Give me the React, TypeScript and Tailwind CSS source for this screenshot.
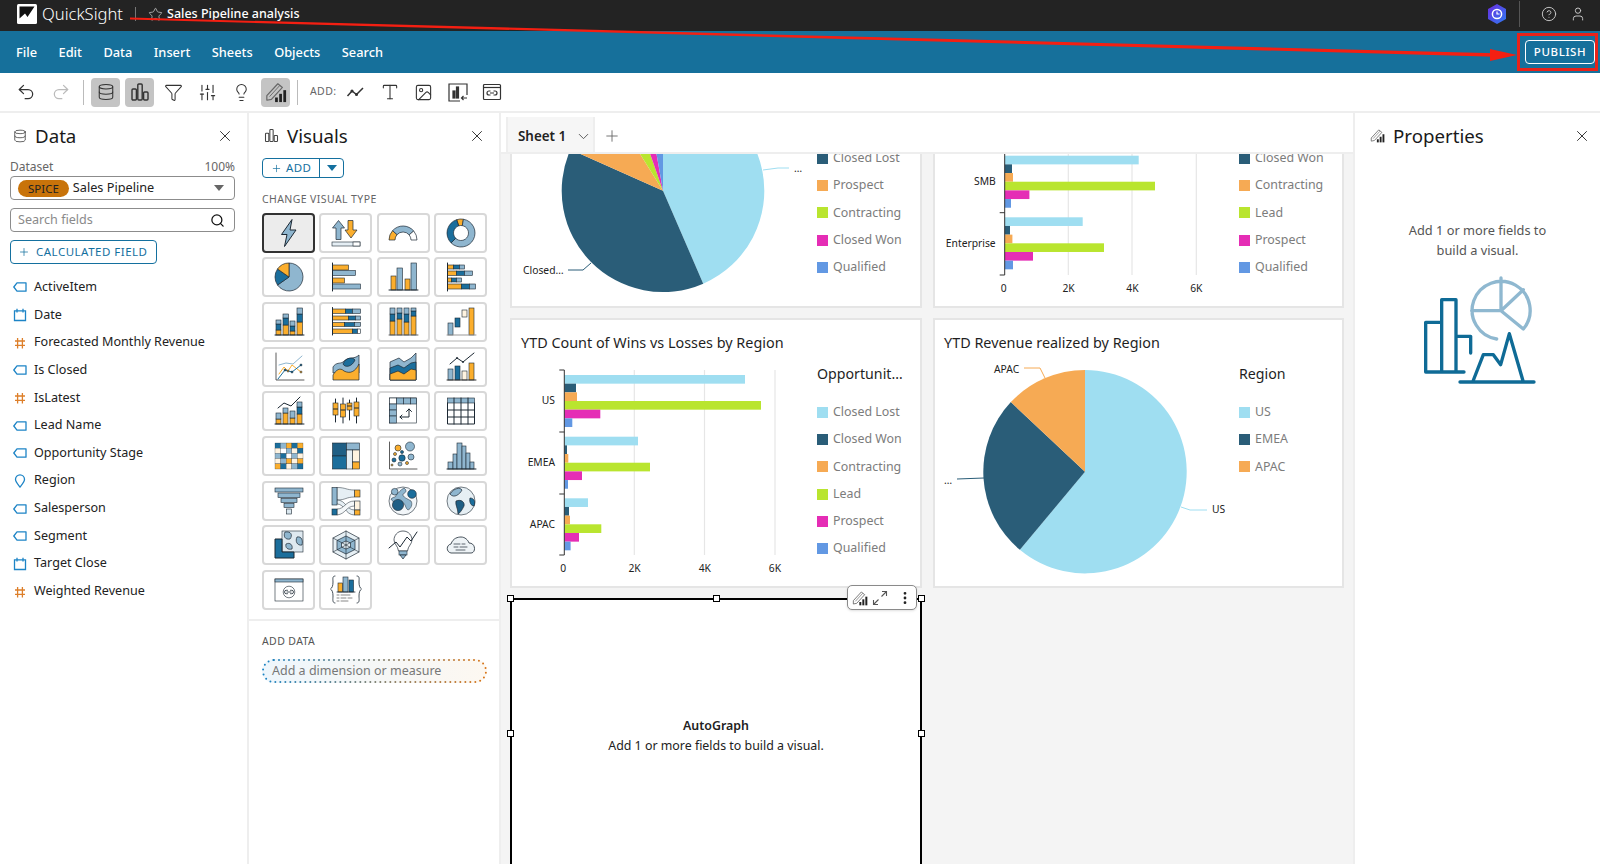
import type { ReactNode } from "react";
import { ChevronDown, CircleHelp, Database, EllipsisVertical, Funnel, Image, Lightbulb, Plus, Redo2, Search, SlidersVertical, Star, Type, Undo2, User, X } from "lucide-react";

const O = "#fbae2d";
const B = "#1b6e9c";
const L = "#8fb6cf";
const C = "#fff3e0";
const S = "#1c2833";

const LIGHT = "#9fdef1";
const DARK = "#2a5d78";
const ORANGE = "#f6aa54";
const LIME = "#b9e52f";
const PINK = "#e52db5";
const BLUE = "#6298e3";
const BAR_COLORS = [LIGHT, DARK, ORANGE, LIME, PINK, BLUE];

const MENU = ["File", "Edit", "Data", "Insert", "Sheets", "Objects", "Search"];

const FIELDS = [
  { type: "tag", name: "ActiveItem" },
  { type: "date", name: "Date" },
  { type: "num", name: "Forecasted Monthly Revenue" },
  { type: "tag", name: "Is Closed" },
  { type: "num", name: "IsLatest" },
  { type: "tag", name: "Lead Name" },
  { type: "tag", name: "Opportunity Stage" },
  { type: "pin", name: "Region" },
  { type: "tag", name: "Salesperson" },
  { type: "tag", name: "Segment" },
  { type: "date", name: "Target Close" },
  { type: "num", name: "Weighted Revenue" },
];

function polar(cx: number, cy: number, r: number, a: number) {
  const t = (a * Math.PI) / 180;
  return [cx + r * Math.sin(t), cy - r * Math.cos(t)];
}

function wedge(cx: number, cy: number, r: number, a0: number, a1: number) {
  const [x0, y0] = polar(cx, cy, r, a0);
  const [x1, y1] = polar(cx, cy, r, a1);
  return `M${cx} ${cy}L${x0} ${y0}A${r} ${r} 0 ${a1 - a0 > 180 ? 1 : 0} 1 ${x1} ${y1}Z`;
}

function ring(cx: number, cy: number, r: number, ri: number, a0: number, a1: number) {
  const [x0, y0] = polar(cx, cy, r, a0);
  const [x1, y1] = polar(cx, cy, r, a1);
  const [x2, y2] = polar(cx, cy, ri, a1);
  const [x3, y3] = polar(cx, cy, ri, a0);
  const big = a1 - a0 > 180 ? 1 : 0;
  return `M${x0} ${y0}A${r} ${r} 0 ${big} 1 ${x1} ${y1}L${x2} ${y2}A${ri} ${ri} 0 ${big} 0 ${x3} ${y3}Z`;
}

const r = (x: number, y: number, w: number, h: number, f: string) => <rect x={x} y={y} width={w} height={h} fill={f} stroke={S} strokeWidth={0.6} />;
const p = (d: string, f: string, sw = 0.7) => <path d={d} fill={f} stroke={S} strokeWidth={sw} strokeLinejoin="round" />;
const ln = (d: string, c = S, sw = 1) => <path d={d} fill="none" stroke={c} strokeWidth={sw} strokeLinecap="round" strokeLinejoin="round" />;
const dot = (x: number, y: number, d: number, f: string) => <circle cx={x} cy={y} r={d} fill={f} stroke={S} strokeWidth={0.6} />;

const HEAT = [
  [B, L, O, B, O],
  [C, "#fff", L, C, B],
  [L, B, "#fff", L, C],
  [C, L, O, C, O],
  [O, B, C, L, B],
];

const VISUAL_ICONS: ReactNode[] = [
  p("M19 2.5 8.5 17.5H14L11.5 29.5 23 13H17Z", L, 1),
  <>
    {p("M6 22.5V11H2.5L8.5 3.5 14.5 11H11V22.5Z", L)}
    {p("M18 3.5H23V13H27L21 21 15 13H18Z", O)}
    {r(2, 25, 28, 4, "#e5eef4")}
    {r(23, 25, 7, 4, "#fff")}
  </>,
  <>
    {p(ring(16, 23, 14, 8, -90, -48), O)}
    {p(ring(16, 23, 14, 8, -48, 50), L)}
    {p(ring(16, 23, 14, 8, 50, 90), "#fff")}
  </>,
  <>
    {p(ring(16, 16, 14, 7.5, -18, 10), O)}
    {p(ring(16, 16, 14, 7.5, 10, 225), L)}
    {p(ring(16, 16, 14, 7.5, 225, 342), B)}
  </>,
  <>
    {p(wedge(16, 16, 14, 0, 235), L)}
    {p(wedge(16, 16, 14, 235, 305), B)}
    {p(wedge(16, 16, 14, 305, 360), O)}
  </>,
  <>
    {r(2.5, 4, 16, 5, O)}
    {r(2.5, 9.5, 23, 5, L)}
    {r(2.5, 17, 12, 5, O)}
    {r(2.5, 23, 28, 5, L)}
    {ln("M2.5 2V30")}
  </>,
  <>
    {r(4, 15, 5, 14, O)}
    {r(10, 7, 5.5, 22, L)}
    {r(18, 18, 5, 11, O)}
    {r(24, 2, 5.5, 27, L)}
    {ln("M2 29H31")}
  </>,
  <>
    {r(2.5, 4, 6, 4, O)}
    {r(8.5, 4, 6, 4, B)}
    {r(14.5, 4, 5, 4, L)}
    {r(2.5, 10, 9, 4.4, O)}
    {r(11.5, 10, 8, 4.4, B)}
    {r(19.5, 10, 8, 4.4, L)}
    {r(2.5, 17, 4, 4, O)}
    {r(6.5, 17, 5, 4, B)}
    {r(11.5, 17, 5, 4, L)}
    {r(2.5, 23, 14, 5, O)}
    {r(16.5, 23, 8, 5, B)}
    {r(24.5, 23, 6, 5, L)}
    {ln("M2.5 2V30")}
  </>,
  <>
    {r(3, 24, 5, 5, O)}
    {r(3, 18, 5, 6, B)}
    {r(3, 14, 5, 4, L)}
    {r(10, 19, 5.5, 10, O)}
    {r(10, 12, 5.5, 7, B)}
    {r(10, 8, 5.5, 4, L)}
    {r(17, 25, 5, 4, O)}
    {r(17, 20, 5, 5, B)}
    {r(17, 15, 5, 5, L)}
    {r(24, 16, 5.5, 13, O)}
    {r(24, 8, 5.5, 8, B)}
    {r(24, 2, 5.5, 6, L)}
    {ln("M2 29H31")}
  </>,
  <>
    {r(2.5, 3, 13, 4.4, O)}
    {r(15.5, 3, 7, 4.4, B)}
    {r(22.5, 3, 8, 4.4, L)}
    {r(2.5, 10, 16, 4, O)}
    {r(18.5, 10, 7, 4, B)}
    {r(25.5, 10, 5, 4, L)}
    {r(2.5, 16.5, 12, 4, O)}
    {r(14.5, 16.5, 10, 4, B)}
    {r(24.5, 16.5, 6, 4, L)}
    {r(2.5, 23, 20, 4.4, O)}
    {r(22.5, 23, 5, 4.4, B)}
    {r(27.5, 23, 3, 4.4, "#fff")}
    {ln("M2.5 1.5V29")}
  </>,
  <>
    {r(3, 15, 5, 14, O)}
    {r(3, 8, 5, 7, B)}
    {r(3, 2, 5, 6, L)}
    {r(10, 13, 5, 16, O)}
    {r(10, 7, 5, 6, B)}
    {r(10, 2, 5, 5, L)}
    {r(17, 16, 5, 13, O)}
    {r(17, 8, 5, 8, B)}
    {r(17, 2, 5, 6, L)}
    {r(24, 10, 5, 19, O)}
    {r(24, 5, 5, 5, B)}
    {r(24, 2, 5, 3, L)}
    {ln("M2 29H31", "#666")}
  </>,
  <>
    {r(3, 17, 5, 12, L)}
    {r(10, 12, 5, 9, B)}
    {r(17, 4, 5, 7, C)}
    {r(24, 2, 5, 27, O)}
    {ln("M2 29H31", "#999")}
  </>,
  <>
    {ln("M3 2V29H31", "#333", 0.8)}
    {ln("M6 14 13 12 20 13 29 5", L)}
    {ln("M6 23 11 16 15 20 19 14 28 21", O)}
    {ln("M5 28 12 19 19 21 28 14", B)}
    {dot(12, 19, 1, B)}
    {dot(19, 21, 1, B)}
    {dot(28, 14, 1, B)}
    {dot(15, 20, 1, O)}
    {dot(28, 21, 1, O)}
  </>,
  <>
    {p("M3 16C6 11 10 13 13 11 18 5 24 9 29 4V22H3Z", L)}
    {p("M13 13C16 6 23 6 25 9 22 16 15 17 13 13Z", B)}
    {p("M3 29V24C6 19 10 16 14 20 20 23 25 21 29 13V29Z", O)}
  </>,
  <>
    {p("M3 11 12 7 17 11 24 7 29 2V29H3Z", L)}
    {p("M3 17 11 14 17 17 24 12 29 11V29H3Z", B)}
    {p("M3 23 11 20 17 23 24 18 29 19V29H3Z", O)}
  </>,
  <>
    {r(3, 18, 5, 11, L)}
    {r(10, 15, 5, 14, B)}
    {r(17, 20, 5, 9, C)}
    {r(24, 12, 5, 17, O)}
    {ln("M2 29H31", "#333")}
    {ln("M5 13 12 7 18 11 29 2")}
    {dot(12, 7, 0.7, S)}
    {dot(18, 11, 0.7, S)}
  </>,
  <>
    {r(3, 24, 5, 5, O)}
    {r(3, 18, 5, 6, L)}
    {r(10, 18, 5, 11, O)}
    {r(10, 13, 5, 5, L)}
    {r(17, 23, 5, 6, O)}
    {r(17, 16, 5, 7, L)}
    {r(24, 19, 5, 10, O)}
    {r(24, 12, 5, 7, B)}
    {r(24, 7, 5, 5, L)}
    {ln("M2 29H31")}
    {ln("M5 13 11 8 18 11 27 2")}
  </>,
  <>
    {ln("M5.5 4V27M13 3V28M19.5 5V25M26.5 3V28")}
    {r(3, 8, 5, 12, O)}
    {r(10.5, 9, 5, 13, O)}
    {r(17, 8, 5, 7, O)}
    {r(24, 7, 5, 14, O)}
    {ln("M3.5 14H7.5M11 15H15M17.5 11H21.5M24.5 13H28.5")}
  </>,
  <>
    {r(2.5, 3, 27, 25, "#fff")}
    {r(2.5, 3, 7, 6, "#fff")}
    {r(9.5, 3, 7, 6, L)}
    {r(16.5, 3, 7, 6, L)}
    {r(23.5, 3, 6, 6, L)}
    {r(2.5, 9, 7, 6, L)}
    {r(2.5, 15, 7, 6, L)}
    {r(2.5, 21, 7, 7, L)}
    {ln("M13 22H22V14M19.5 16.5 22 14 24.5 16.5M15 20 13 22 15 24")}
  </>,
  <>
    {r(2.5, 3, 27, 5, L)}
    {ln("M2.5 8V29H29.5V8M2.5 15H29.5M2.5 22H29.5M9 3V29M16 3V29M23 3V29")}
  </>,
  <>
    {HEAT.map((row, i) =>
      row.map((c, j) => <rect key={`${i}-${j}`} x={2 + j * 5.6} y={3 + i * 5.2} width={5.6} height={5.2} fill={c} stroke={S} strokeWidth={0.25} />),
    )}
  </>,
  <>
    {r(2.5, 3, 14, 13, "#1f5f85")}
    {r(2.5, 16, 14, 13, B)}
    {r(16.5, 3, 13, 7, L)}
    {r(16.5, 10, 6, 19, "#e5eef4")}
    {r(22.5, 10, 7, 12, C)}
    {r(22.5, 22, 7, 7, O)}
  </>,
  <>
    {ln("M2.5 2V29H30", "#333", 0.8)}
    {dot(11, 8, 3, O)}
    {dot(23, 6.5, 4.5, L)}
    {dot(8, 14, 1.5, O)}
    {dot(15, 12, 1.5, B)}
    {dot(15, 18, 3.2, B)}
    {dot(24, 17, 3, L)}
    {dot(7, 20, 2, B)}
    {dot(13, 24, 2, L)}
    {dot(20, 23, 1.5, O)}
    {dot(5, 25, 1, O)}
  </>,
  <>
    {r(3, 22, 5, 7, L)}
    {r(8, 14, 4, 15, L)}
    {r(12, 3, 5, 26, L)}
    {r(17, 6, 4, 23, L)}
    {r(21, 13, 4, 16, L)}
    {r(25, 22, 4, 7, L)}
    {ln("M2 29H31")}
  </>,
  <>
    {r(2, 3, 28, 4, L)}
    {r(5, 8, 22, 4.5, L)}
    {r(8, 13.5, 16, 4, L)}
    {r(11, 18.5, 10, 4, L)}
    {r(13.5, 24, 5, 5, "#dbe8f0")}
  </>,
  <>
    {p("M7 2.5C16 2.5 16 5 24.7 5V12C16 12 16 15 7 15Z", "#e6eff4", 0.5)}
    {p("M7 15C16 15 16 25 24.7 25V30C15 30 15 19 7 19Z", "#e6eff4", 0.5)}
    {p("M7 24C15 24 15 16 24.7 16V21C16 21 16 29 7 30Z", "#f4f7f9", 0.5)}
    {r(2, 2.5, 5, 17.5, L)}
    {r(2, 24, 5, 6, B)}
    {r(24.7, 5, 5.3, 7, O)}
    {r(24.7, 16, 5.3, 9, C)}
    {r(24.7, 25, 5.3, 5, O)}
  </>,
  <>
    {dot(16, 16, 14, "#f2f6f9")}
    {p("M4 14C7 11 9 13 9 10 12 8 13 5 17 3 21 6 18 8 16 9 15 12 21 14 24 16 26 19 24 24 21 25 18 23 19 19 15 17 10 18 6 18 4 14Z", L, 0.5)}
    {dot(11, 20, 5.6, "#1f5f85")}
    {dot(7.7, 6.7, 3.3, L)}
    {dot(25, 9, 4.3, B)}
  </>,
  <>
    {dot(16, 16, 14, "#e6eff4")}
    {p("M5 9C9 3 15 2 17 5 15 9 9 14 5 9Z", L)}
    {p("M11 16C16 14 20 17 19 21 17 25 15 28 13 29 13 23 10 20 11 16Z", "#1f5f85")}
    {p("M25 13C29 13 31 17 29 21 26 21 24 17 25 13Z", B)}
  </>,
  <>
    {r(9, 2, 21, 21, "#dfe9f0")}
    {p("M12 3C18 2 20 6 17 10 12 11 10 7 12 3ZM24 8C29 7 30 12 29 16 24 17 22 12 24 8Z", L)}
    {p("M2 10H9V23H21V29H2Z", B, 1)}
    {p("M13 15C17 13 20 16 19 20 15 21 12 19 13 15Z", L)}
  </>,
  <>
    {p("M16 2 29 9V23L16 30 3 23V9Z", "#e6eff4")}
    {p("M16 7 25 11.5V20.5L16 25 7 20.5V11.5Z", L)}
    {p("M16 12 20.5 14V18L16 20 11.5 18V14Z", "#e6eff4")}
    {ln("M16 2V30M3 9 29 23M29 9 3 23", S, 0.6)}
  </>,
  <>
    {p("M16 2C10 2 7 7 7 11 7 15 11 17 11.5 22H20.5C21 17 25 15 25 11 25 7 22 2 16 2Z", "#fff")}
    {r(12, 22, 8, 4, L)}
    {p("M13 26H19L16 30Z", L)}
    {ln("M2 19 9 13 13 18 20 8 24 12 30 3")}
  </>,
  <>
    {p("M6 24C1 23 1 16 6 15 8 9 13 8 16 8 20 8 23 11 24 14 31 14 31 24 26 24Z", "#eef3f6", 0.8)}
    {ln("M9 15H15M17 15H20M9 18H13M15 18H22M11 21H20", S, 0.7)}
  </>,
  <>
    {r(2, 5, 28, 22, "#fff")}
    {r(2, 5, 28, 3, L)}
    {dot(16, 18, 5.8, "#fff")}
    {ln("M14.5 16.3H13.2A1.7 1.7 0 0 0 13.2 19.7H14.5M17.5 16.3H18.8A1.7 1.7 0 0 1 18.8 19.7H17.5M14 18H18", S, 0.8)}
  </>,
  <>
    {ln("M5 2C2 2 3 5 3 8 3 12 2 14 0.5 15 2 16 3 18 3 22 3 25 2 29 5 29M27 2C30 2 29 5 29 8 29 12 30 14 31.5 15 30 16 29 18 29 22 29 25 30 29 27 29", S, 0.8)}
    {r(8, 9, 4.5, 9, O)}
    {r(13, 3, 5, 15, L)}
    {r(19, 6, 4.5, 12, B)}
    {ln("M7 18H25", S, 0.8)}
    {ln("M7 21H9M11 21H20M7 24H9M11 24H16M18 24H22M7 27H9M11 27H18", "#555", 0.7)}
  </>,
];

function PenChart({ size = 22 }: { size?: number }) {
  return (
    <svg width={size} height={size} viewBox="0 0 24 24" fill="none">
      <path d="M2 21V16L14 3 19 7 7 20Z" stroke="#666" strokeWidth={1.3} strokeLinejoin="round" />
      <path d="M5 17 16 5" stroke="#666" strokeWidth={1} />
      <rect x={11} y={18} width={3} height={5} fill="#222" />
      <rect x={15.5} y={14} width={3} height={9} fill="#222" />
      <rect x={20} y={10} width={3} height={13} fill="#222" />
    </svg>
  );
}

function BarsOutline({ size = 20, color = "#333" }: { size?: number; color?: string }) {
  return (
    <svg width={size} height={size} viewBox="0 0 20 20" fill="none" stroke={color} strokeWidth={1.4}>
      <rect x={2} y={7} width={4.4} height={11} rx={1} />
      <rect x={7.8} y={2} width={4.4} height={16} rx={1} />
      <rect x={13.6} y={10} width={4.4} height={8} rx={1} />
    </svg>
  );
}

function FieldIcon({ type }: { type: string }) {
  if (type === "num") {
    return (
      <svg width={14} height={14} viewBox="0 0 14 14" fill="none" stroke="#dd7f2a" strokeWidth={1.3}>
        <path d="M4.6 2V12.5M9.4 2V12.5M2 5H12M2 9.4H12" />
      </svg>
    );
  }
  if (type === "date") {
    return (
      <svg width={14} height={14} viewBox="0 0 14 14" fill="none" stroke="#1d84c6" strokeWidth={1.3}>
        <path d="M1.5 2.8H12.5V12.5H1.5ZM4 .8V4.4M10 .8V4.4" />
      </svg>
    );
  }
  if (type === "pin") {
    return (
      <svg width={14} height={14} viewBox="0 0 14 14" fill="none" stroke="#1d84c6" strokeWidth={1.3}>
        <path d="M7 13C5 10.5 2.5 8 2.5 5.3A4.5 4.5 0 0 1 11.5 5.3C11.5 8 9 10.5 7 13Z" />
      </svg>
    );
  }
  return (
    <svg width={14} height={14} viewBox="0 0 14 14" fill="none" stroke="#1d84c6" strokeWidth={1.3}>
      <path d="M.8 7 4 2.8H13V11.2H4Z" strokeLinejoin="round" />
    </svg>
  );
}

function LegendItems({ items }: { items: [string, string][] }) {
  return (
    <>
      {items.map(([color, name]) => (
        <div key={name} className="flex h-[27.2px] items-center gap-[5px] text-[12.4px] text-[#7c7c7c]">
          <span className="h-[11px] w-[11px] shrink-0" style={{ background: color }} />
          {name}
        </div>
      ))}
    </>
  );
}

function Legend({ title, items }: { title: string; items: [string, string][] }) {
  return (
    <div className="pt-[10px]">
      <div className="h-[20px] whitespace-nowrap text-[14.2px] leading-[20px] text-[#1f1f1f]">{title}</div>
      <div className="mt-[15px]">
        <LegendItems items={items} />
      </div>
    </div>
  );
}

type BarGroup = { label: string; labelY: number; top: number; bars: number[] };

function BarPlot({ vx, vy, axisX, top, ticks, gridXs, bottomY, labelRight, groups }: { vx: number; vy: number; axisX: number; top: number; ticks: number[]; gridXs: number[]; bottomY: number; labelRight: number; groups: BarGroup[] }) {
  return (
    <svg width={296} height={232} viewBox={`${vx} ${vy} 296 232`} className="shrink-0">
      {gridXs.map((x) => (
        <line key={x} x1={x} x2={x} y1={top} y2={bottomY} stroke="#e6e6e6" strokeWidth={1.2} />
      ))}
      {groups.map((g) => (
        <g key={g.label}>
          {g.bars.map((w, i) => (
            <rect key={i} x={axisX} y={g.top + i * 8.67} width={w} height={8.67} fill={BAR_COLORS[i]} />
          ))}
          <text x={labelRight} y={g.labelY + 3.6} textAnchor="end" fontSize={10.3} fill="#222">{g.label}</text>
        </g>
      ))}
      <line x1={axisX} x2={axisX} y1={top} y2={bottomY} stroke="#333" strokeWidth={1} />
      {ticks.map((y) => (
        <line key={y} x1={axisX - 5} x2={axisX} y1={y} y2={y} stroke="#333" strokeWidth={1} />
      ))}
      {["0", "2K", "4K", "6K"].map((t, i) => (
        <text key={t} x={axisX + (i * (gridXs[2] - axisX)) / 3 - (i === 0 ? 1 : 0)} y={bottomY + 16.5} textAnchor="middle" fontSize={10.3} fill="#222">{t}</text>
      ))}
    </svg>
  );
}

function Pie({ vx, vy, cx, cy, radius, slices, children }: { vx: number; vy: number; cx: number; cy: number; radius: number; slices: [number, number, string][]; children?: ReactNode }) {
  return (
    <svg width={296} height={232} viewBox={`${vx} ${vy} 296 232`} className="shrink-0">
      {slices.map(([a0, a1, c]) => (
        <path key={a0} d={wedge(cx, cy, radius, a0, a1)} fill={c} />
      ))}
      {children}
    </svg>
  );
}

function Card({ title, children, gap }: { title?: string; children: ReactNode; gap: string }) {
  return (
    <div className="h-[270px] border-2 border-[#e5e5e5] bg-white">
      <div className="h-[34px] pl-[9px] pt-[13px] text-[14.4px] leading-[20px] text-[#1f1f1f]">{title}</div>
      <div className={`flex h-[232px] ${gap}`}>{children}</div>
    </div>
  );
}

function Handle({ className }: { className: string }) {
  return <span className={`absolute h-[7px] w-[7px] border-[1.5px] border-black bg-white ${className}`} />;
}

function PanelHead({ icon, title, gapClass, padClass }: { icon: ReactNode; title: string; gapClass: string; padClass: string }) {
  return (
    <div className={`flex h-[46px] items-center justify-between ${padClass}`}>
      <div className={`flex items-center ${gapClass}`}>
        {icon}
        <span className="text-[18.7px] leading-none text-[#1a1a1a]">{title}</span>
      </div>
      <X size={18} strokeWidth={1.3} className="text-[#333]" />
    </div>
  );
}

function ToolButton({ active, children }: { active?: boolean; children: ReactNode }) {
  return (
    <div className={`flex h-[29px] w-[29px] items-center justify-center rounded-[4px] ${active ? "bg-[#c4c4c4]" : ""}`}>{children}</div>
  );
}

export default function App() {
  return (
    <div className="relative flex h-[864px] w-[1600px] flex-col overflow-hidden bg-white font-['Noto_Sans',sans-serif] text-[12.6px] text-[#222]">
      {/* Top bar */}
      <header className="flex h-[31px] shrink-0 items-center bg-[#232323] pb-[3px] pl-[17px] pr-[14px] text-white">
        <svg width={20} height={20} viewBox="0 0 20 20">
          <rect width={20} height={20} rx={1.5} fill="#fff" />
          <path d="M2.5 2.5H17.5L10.5 13 8 9.5 2.5 14.5Z" fill="#111" />
        </svg>
        <span className="ml-[5px] text-[16.6px] font-light leading-none">QuickSight</span>
        <span className="ml-[12px] h-[14px] w-px bg-[#777]" />
        <Star size={15} strokeWidth={1.2} className="ml-[12px] text-[#ccc]" />
        <span className="ml-[4px] text-[12.5px] font-medium">Sales Pipeline analysis</span>
        <svg width={18} height={20} viewBox="0 0 18 20" className="ml-auto">
          <defs>
            <linearGradient id="hex" x1="0" y1="0" x2="1" y2="1">
              <stop offset="0" stopColor="#6a2be0" />
              <stop offset="1" stopColor="#2f7cf0" />
            </linearGradient>
          </defs>
          <path d="M9 0 18 5V15L9 20 0 15V5Z" fill="url(#hex)" />
          <circle cx={9} cy={10} r={4.6} fill="none" stroke="#fff" strokeWidth={1.5} />
          <path d="M9 7.5V10H11.5" fill="none" stroke="#fff" strokeWidth={1.2} />
        </svg>
        <span className="ml-[13px] h-[26px] w-px bg-[#555]" />
        <CircleHelp size={16} strokeWidth={1.4} className="ml-[21px] text-[#ccc]" />
        <User size={16} strokeWidth={1.4} className="ml-[13px] text-[#ccc]" />
      </header>

      {/* Menu bar */}
      <nav className="flex h-[42px] shrink-0 items-center justify-between bg-[#16709b] pl-[16px] pr-[5px] text-white">
        <div className="flex gap-[21.5px] pt-px text-[12.8px] font-medium">
          {MENU.map((m) => (
            <span key={m}>{m}</span>
          ))}
        </div>
        <button className="h-[24px] w-[70px] rounded-[4px] border-[1.5px] border-white text-[11.5px] font-medium tracking-[0.6px]">PUBLISH</button>
      </nav>

      {/* Toolbar */}
      <div className="flex h-[40px] shrink-0 items-center border-b-2 border-[#eeeeee] pl-[16px] text-[#333]">
        <Undo2 size={20} strokeWidth={1.5} />
        <Redo2 size={20} strokeWidth={1.5} className="ml-[15px] text-[#bbb]" />
        <span className="ml-[12px] h-[25px] w-px bg-[#bbb]" />
        <div className="ml-[7px] flex items-center gap-[5px]">
          <ToolButton active><Database size={18} strokeWidth={1.4} /></ToolButton>
          <ToolButton active><BarsOutline /></ToolButton>
          <ToolButton><Funnel size={19} strokeWidth={1.3} /></ToolButton>
          <ToolButton><SlidersVertical size={19} strokeWidth={1.4} /></ToolButton>
          <ToolButton><Lightbulb size={19} strokeWidth={1.3} /></ToolButton>
          <ToolButton active><PenChart /></ToolButton>
        </div>
        <span className="ml-[7px] h-[25px] w-px bg-[#bbb]" />
        <span className="ml-[12px] text-[10.5px] tracking-[0.4px] text-[#666]">ADD:</span>
        <div className="ml-[5px] flex items-center gap-[5px]">
          <ToolButton>
            <svg width={19} height={19} viewBox="0 0 19 19" fill="none" stroke="#333" strokeWidth={1.5}>
              <path d="M1.5 13 6 8 10.5 11.5 17 5" />
              <circle cx={6} cy={8} r={0.8} fill="#333" />
              <circle cx={10.5} cy={11.5} r={0.8} fill="#333" />
            </svg>
          </ToolButton>
          <ToolButton><Type size={20} strokeWidth={1.3} /></ToolButton>
          <ToolButton><Image size={19} strokeWidth={1.4} /></ToolButton>
          <ToolButton>
            <svg width={20} height={20} viewBox="0 0 20 20" fill="none" stroke="#333" strokeWidth={1.2}>
              <path d="M19 13V2H1V19H12" />
              <rect x={5} y={9} width={2} height={7} fill="#333" />
              <rect x={8.5} y={5} width={2} height={11} fill="#333" />
              <path d="M19 16H13.5M15.5 14 13.5 16 15.5 18" />
            </svg>
          </ToolButton>
          <ToolButton>
            <svg width={20} height={20} viewBox="0 0 20 20" fill="none" stroke="#333" strokeWidth={1.2}>
              <rect x={1.5} y={2.5} width={17} height={15} rx={1} />
              <path d="M1.5 5.5H18.5" />
              <path d="M8.5 9H7A2 2 0 0 0 7 13H8.5M11.5 9H13A2 2 0 0 1 13 13H11.5M8 11H12" />
            </svg>
          </ToolButton>
        </div>
      </div>

      {/* Body */}
      <div className="flex min-h-0 flex-1">
        {/* Data panel */}
        <aside className="w-[249px] shrink-0 border-r-2 border-[#eeeeee]">
          <div className="pl-[13px]">
            <PanelHead icon={<Database size={14} strokeWidth={1.4} className="text-[#444]" />} title="Data" gapClass="gap-[8px]" padClass="pr-[13px]" />
          </div>
          <div className="pl-[10px] pr-[12px]">
            <div className="flex h-[16px] items-center justify-between text-[12px] text-[#666]">
              <span>Dataset</span>
              <span>100%</span>
            </div>
            <div className="mt-px flex h-[24px] items-center rounded-[4px] border-[1.5px] border-[#8c8c8c] pl-[7px] pr-[10px]">
              <span className="rounded-full bg-[#c8730a] px-[10px] text-[11.5px] leading-[17px] text-[#222]">SPICE</span>
              <span className="ml-[4px] text-[12.7px]">Sales Pipeline</span>
              <svg width={10} height={6} viewBox="0 0 10 6" className="ml-auto"><path d="M0 0H10L5 6Z" fill="#666" /></svg>
            </div>
            <div className="mt-[8px] flex h-[24px] items-center justify-between rounded-[4px] border-[1.5px] border-[#8c8c8c] pl-[7px] pr-[9px] text-[#8a8a8a]">
              Search fields
              <Search size={15} strokeWidth={2} className="text-[#111]" />
            </div>
            <div className="mt-[8px] flex h-[24px] w-[147px] items-center rounded-[4px] border-[1.5px] border-[#14709f] pl-[7px] text-[11.5px] tracking-[0.5px] text-[#14709f]">
              <Plus size={12} strokeWidth={1.5} />
              <span className="ml-[6px]">CALCULATED FIELD</span>
            </div>
          </div>
          <ul className="mt-[9.5px]">
            {FIELDS.map((f) => (
              <li key={f.name} className="flex h-[27.67px] items-center gap-[7px] pl-[13px]">
                <FieldIcon type={f.type} />
                {f.name}
              </li>
            ))}
          </ul>
        </aside>

        {/* Visuals panel */}
        <aside className="w-[252px] shrink-0 border-r-2 border-[#eeeeee]">
          <div className="pl-[15px]">
            <PanelHead icon={<BarsOutline size={15} color="#444" />} title="Visuals" gapClass="gap-[8px]" padClass="pr-[13px]" />
          </div>
          <div className="pl-[13px]">
            <div className="-mt-px flex h-[20px] w-[82px] items-center rounded-[4px] border-[1.5px] border-[#14709f] text-[11.5px] tracking-[0.4px] text-[#14709f]">
              <div className="flex h-full w-[57px] items-center gap-[4px] border-r-[1.5px] border-[#14709f] pl-[8px]">
                <Plus size={11} strokeWidth={1.5} />
                ADD
              </div>
              <svg width={10} height={6} viewBox="0 0 10 6" className="ml-[7px]"><path d="M0 0H10L5 6Z" fill="#14709f" /></svg>
            </div>
            <div className="mt-[14px] h-[14px] text-[10.5px] leading-[14px] tracking-[0.4px] text-[#666]">CHANGE VISUAL TYPE</div>
            <div className="mt-[6.5px] grid grid-cols-[repeat(4,53px)] gap-x-[4.4px] gap-y-[4.7px]">
              {VISUAL_ICONS.map((icon, i) => (
                <div key={i} className={`flex h-[40px] items-center justify-center rounded-[4px] border-2 ${i === 0 ? "border-[#333] bg-[#ececec]" : "border-[#d8d8d8] bg-white"}`}>
                  <svg width={32} height={32} viewBox="0 0 32 32">{icon}</svg>
                </div>
              ))}
            </div>
          </div>
          <div className="mt-[9px] border-t-2 border-[#eeeeee] pl-[13px]">
            <div className="mt-[13px] h-[14px] text-[10.5px] leading-[14px] tracking-[0.4px] text-[#555]">ADD DATA</div>
            <div className="relative mt-[11px] flex h-[24px] w-[225px] items-center rounded-full bg-gradient-to-r from-[#eef6fc] to-[#fdf8f1] pl-[10px] pt-px text-[12.5px] text-[#777]">
              Add a dimension or measure
              <svg width={225} height={24} viewBox="0 0 225 24" className="absolute left-0 top-0">
                <defs>
                  <linearGradient id="pill">
                    <stop offset="0" stopColor="#1b84c4" />
                    <stop offset="1" stopColor="#d9761a" />
                  </linearGradient>
                </defs>
                <rect x={1} y={1} width={223} height={22} rx={11} fill="none" stroke="url(#pill)" strokeWidth={2} strokeLinecap="round" strokeDasharray="0 5" />
              </svg>
            </div>
          </div>
        </aside>

        {/* Canvas */}
        <main className="flex w-[852px] shrink-0 flex-col">
          <div className="flex h-[41px] shrink-0 items-end border-b-2 border-[#eeeeee] bg-white pl-[5px]">
            <div className="flex h-[35px] w-[89px] items-center border-x-2 border-[#eeeeee] bg-[#f6f6f6] pl-[10px] pt-[4px] text-[13.4px] font-semibold">
              Sheet 1
              <ChevronDown size={17} strokeWidth={1.2} className="ml-[9px] text-[#444]" />
            </div>
            <Plus size={18} strokeWidth={1.2} className="mb-[7px] ml-[8px] text-[#666]" />
          </div>
          <div className="min-h-0 flex-1 overflow-hidden bg-[#f4f4f4] pl-[9px]">
            <div className="-mt-[116px] grid grid-cols-[412px_411px] gap-x-[11px] gap-y-[10px]">
              <Card gap="gap-[9px]">
                <Pie vx={512} vy={74} cx={663} cy={190.7} radius={101.3} slices={[[0, 156.6, LIGHT], [156.6, 294, DARK], [294, 328, ORANGE], [328, 340.7, LIME], [340.7, 350, PINK], [350, 360, BLUE]]}>
                  <path d="M763 170 778 168H789" fill="none" stroke={LIGHT} strokeWidth={1} />
                  <text x={794} y={172} fontSize={10.3} fill="#222">…</text>
                  <path d="M568 270H583L591 263" fill="none" stroke={DARK} strokeWidth={1} />
                  <text x={523} y={274} fontSize={10.3} fill="#222">Closed…</text>
                </Pie>
                <div className="pt-[71px]">
                  <LegendItems items={[[DARK, "Closed Lost"], [ORANGE, "Prospect"], [LIME, "Contracting"], [PINK, "Closed Won"], [BLUE, "Qualified"]]} />
                </div>
              </Card>
              <Card gap="gap-[8px]">
                <BarPlot vx={935} vy={74} axisX={1004.7} top={140} ticks={[212.7, 275]} gridXs={[1068.3, 1132, 1196.3]} bottomY={275} labelRight={995.7} groups={[
                  { label: "SMB", labelY: 181.7, top: 155.7, bars: [134, 7.3, 8.3, 150.3, 24.7, 6.3] },
                  { label: "Enterprise", labelY: 243, top: 217.3, bars: [78, 5.3, 7.7, 99.3, 28.3, 8.3] },
                ]} />
                <div className="pt-[71px]">
                  <LegendItems items={[[DARK, "Closed Won"], [ORANGE, "Contracting"], [LIME, "Lead"], [PINK, "Prospect"], [BLUE, "Qualified"]]} />
                </div>
              </Card>
              <Card title="YTD Count of Wins vs Losses by Region" gap="gap-[9px]">
                <BarPlot vx={512} vy={354} axisX={564.3} top={370} ticks={[370, 432, 494, 555]} gridXs={[634.3, 704.5, 775]} bottomY={555} labelRight={555} groups={[
                  { label: "US", labelY: 400.7, top: 375, bars: [180.7, 11.7, 12.7, 196.7, 36, 8] },
                  { label: "EMEA", labelY: 462, top: 436.7, bars: [73.7, 2.7, 4, 85.7, 17.7, 3.7] },
                  { label: "APAC", labelY: 524, top: 498.3, bars: [23.7, 4.7, 5.7, 37, 14.7, 6.3] },
                ]} />
                <Legend title="Opportunit…" items={[[LIGHT, "Closed Lost"], [DARK, "Closed Won"], [ORANGE, "Contracting"], [LIME, "Lead"], [PINK, "Prospect"], [BLUE, "Qualified"]]} />
              </Card>
              <Card title="YTD Revenue realized by Region" gap="gap-[8px]">
                <Pie vx={935} vy={354} cx={1085} cy={471.7} radius={101.7} slices={[[0, 219.8, LIGHT], [219.8, 313.2, DARK], [313.2, 360, ORANGE]]}>
                  <path d="M1024 368H1040L1045 378" fill="none" stroke={ORANGE} strokeWidth={1} />
                  <text x={994} y={372.5} fontSize={10.3} fill="#222">APAC</text>
                  <path d="M957 479 984 478" fill="none" stroke={DARK} strokeWidth={1} />
                  <text x={944} y={484} fontSize={10.3} fill="#222">…</text>
                  <path d="M1181 507 1190 510 1207 510" fill="none" stroke={LIGHT} strokeWidth={1} />
                  <text x={1212} y={513} fontSize={10.3} fill="#222">US</text>
                </Pie>
                <Legend title="Region" items={[[LIGHT, "US"], [DARK, "EMEA"], [ORANGE, "APAC"]]} />
              </Card>
              <div className="relative flex h-[272px] flex-col items-center justify-center border-2 border-black bg-white pt-[3px] text-[12.4px]">
                <span className="font-semibold leading-[20px]">AutoGraph</span>
                <span className="leading-[20px]">Add 1 or more fields to build a visual.</span>
                <Handle className="-left-[5px] -top-[5px]" />
                <Handle className="-top-[5px] left-[201px]" />
                <Handle className="-right-[5px] -top-[5px]" />
                <Handle className="-left-[5px] top-[130px]" />
                <Handle className="-right-[5px] top-[130px]" />
                <div className="absolute -top-[15px] left-[335px] flex h-[25px] w-[70px] items-center rounded-[5px] border border-[#8a8a8a] bg-white pl-[4px] pr-[3px] shadow-sm">
                  <PenChart size={16} />
                  <svg width={16} height={16} viewBox="0 0 16 16" fill="none" stroke="#555" strokeWidth={1.1} className="ml-[4px]">
                    <path d="M9.5 6.5 14.5 1.5M10 1.5H14.5V6M6.5 9.5 1.5 14.5M6 14.5H1.5V10" />
                  </svg>
                  <EllipsisVertical size={16} strokeWidth={2.2} className="ml-auto text-[#222]" />
                </div>
              </div>
            </div>
          </div>
        </main>

        {/* Properties panel */}
        <aside className="flex-1 border-l-2 border-[#eeeeee]">
          <div className="pl-[15px]">
            <PanelHead icon={<PenChart size={15} />} title="Properties" gapClass="gap-[8px]" padClass="pr-[9px]" />
          </div>
          <div className="mt-[61px] text-center text-[12.8px] leading-[20px] text-[#555]">
            <p>Add 1 or more fields to</p>
            <p>build a visual.</p>
          </div>
          <div className="mt-[13px] flex justify-center pl-[2px]">
            <svg width={118} height={114} viewBox="180 190 354 342" fill="none" strokeWidth={10} strokeLinecap="round" strokeLinejoin="round">
              <path d="M312 487H197V338H245V270H288V380H332V430M245 338V487M288 380V487" stroke="#0f6b96" />
              <path d="M410 388A87 87 0 1 1 490 358L423 303V205M335 303H423L490 240" stroke="#8fb8d0" />
              <path d="M300 517H522M338 517 370 435H400L422 465 448 372 490 517" stroke="#0f6b96" />
            </svg>
          </div>
        </aside>
      </div>

      {/* Red annotation */}
      <svg width={1600} height={864} viewBox="0 0 1600 864" className="pointer-events-none absolute left-0 top-0">
        <path d="M130 17.6 1495 53.3V56.7L130 19.6Z" fill="#f41f12" />
        <path d="M1490 49 1517 55 1490 61Z" fill="#f41f12" />
      </svg>
      <div className="pointer-events-none absolute left-[1517px] top-[33px] h-[38px] w-[81px] border-[3px] border-[#e8231a]" />
    </div>
  );
}
